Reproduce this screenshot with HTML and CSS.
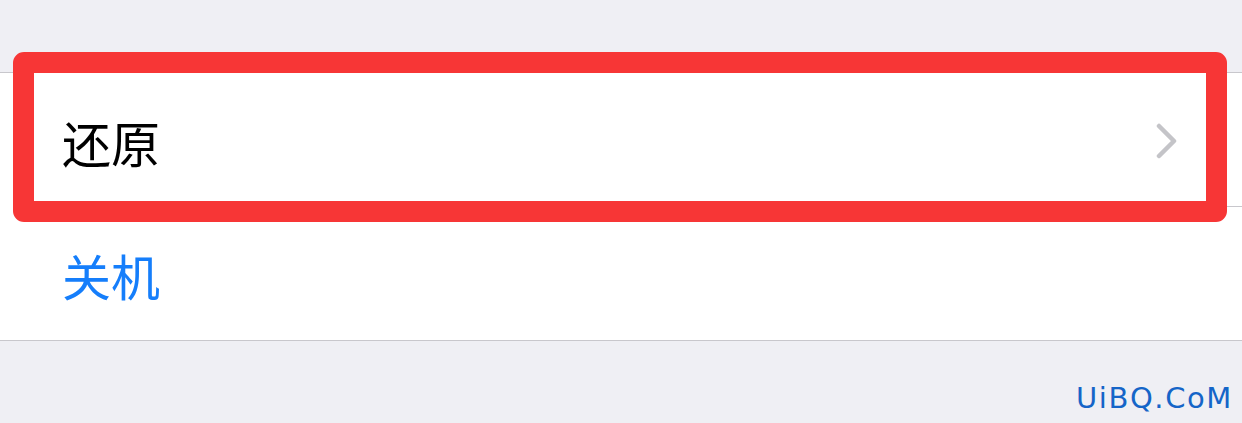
FILE: index.html
```html
<!DOCTYPE html>
<html lang="zh-CN">
<head>
    <meta charset="UTF-8">
    <meta name="viewport" content="width=device-width, initial-scale=1.0">
    <title>通用</title>
    <link rel="stylesheet" href="styles.css">
</head>
<body>
    <div class="settings">
        <div class="group">
            <div class="cell cell-link">
                <span class="cell-title">还原</span>
                <svg class="chevron" width="22" height="36" viewBox="0 0 22 36">
                    <path d="M3 3 L18 18 L3 33" fill="none" stroke="#c4c4c8" stroke-width="4.5" stroke-linecap="round" stroke-linejoin="round"/>
                </svg>
                <div class="highlight"></div>
            </div>
            <div class="cell">
                <span class="cell-title action">关机</span>
            </div>
        </div>
        <div class="watermark">UiBQ.CoM</div>
    </div>
</body>
</html>
```

FILE: styles.css
```css
body {
    margin: 0;
    padding: 0;
    background: #efeff4;
    font-family: "Noto Sans CJK SC", "Noto Sans", sans-serif;
    overflow: hidden;
}

.settings {
    padding-top: 72px;
}

.group {
    background: #fff;
    border-top: 1px solid #c8c7cc;
    border-bottom: 1px solid #c8c7cc;
}

.cell {
    position: relative;
    display: flex;
    align-items: center;
    justify-content: space-between;
    height: 133px;
    padding: 0 64px 0 62px;
}

/* inset separator, like iOS table cells */
.cell + .cell::before {
    content: "";
    position: absolute;
    top: -1px;
    left: 62px;
    right: 0;
    border-top: 1px solid #c8c7cc;
}

.cell + .cell {
    margin-top: 1px;
}

.cell-title {
    font-size: 49px;
    line-height: 1;
    color: #000;
    padding-top: 4px;
}

.cell-title.action {
    color: #157efb;
    padding-top: 2px;
}

.chevron {
    display: block;
    margin-top: 2px;
}

.highlight {
    position: absolute;
    left: 13px;
    right: 15px;
    top: -21px;
    bottom: -16px;
    border: 21px solid #f73636;
    border-radius: 11px;
    z-index: 2;
}

.watermark {
    text-align: right;
    padding: 40px 9px 0 0;
    font-family: "DejaVu Sans", sans-serif;
    font-size: 29px;
    letter-spacing: 1.6px;
    line-height: 1.2;
    color: #1565c8;
}
```
